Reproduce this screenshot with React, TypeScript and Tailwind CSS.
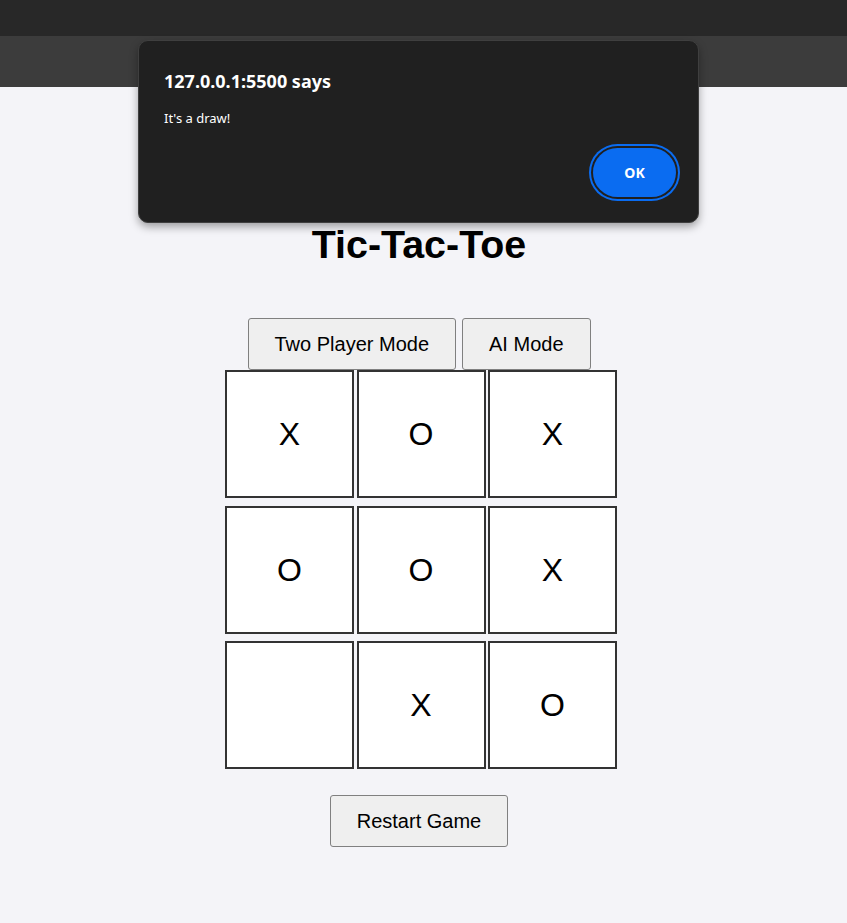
import React from "react";

const board = ["X", "O", "X", "O", "O", "X", "", "X", "O"];

export default function App() {
  return (
    <div className="relative min-h-screen bg-[#f4f4f8] font-['Liberation_Sans',Arial,sans-serif] text-black">
      <div className="h-[36px] bg-[#282828]" />
      <div className="h-[51px] bg-[#3c3c3c]" />

      <main className="flex w-[838px] flex-col items-center pt-[135px]">
        <h1 className="text-[39.4px] font-bold leading-[44px]">Tic-Tac-Toe</h1>

        <div className="mt-[52px] flex gap-[6px]">
          <button className="rounded-[3px] border border-[#808080] bg-[#efefef] px-[26px] py-[14px] text-[20px] leading-[22px]">
            Two Player Mode
          </button>
          <button className="rounded-[3px] border border-[#808080] bg-[#efefef] px-[26px] py-[14px] text-[20px] leading-[22px]">
            AI Mode
          </button>
        </div>

        <div className="ml-[4px] grid grid-cols-[129px_129px_129px] auto-rows-[128px] gap-x-[2.5px] gap-y-[7.5px]">
          {board.map((mark, i) => (
            <div
              key={i}
              className="flex items-center justify-center border-2 border-[#333333] bg-white text-[32px]"
            >
              {mark}
            </div>
          ))}
        </div>

        <button className="mt-[26px] rounded-[3px] border border-[#808080] bg-[#efefef] px-[26px] py-[14px] text-[20px] leading-[22px]">
          Restart Game
        </button>
      </main>

      {/* browser alert */}
      <div className="absolute left-[138px] top-[40px] flex h-[183px] w-[561px] flex-col rounded-[10px] border border-[#3f3f3f] bg-[#202020] pl-[25px] pr-[22px] pt-[28px] font-['Noto_Sans','Open_Sans',sans-serif] text-white shadow-[0_4px_8px_rgba(0,0,0,0.35)]">
        <div className="text-[18px] font-bold leading-[24px]">127.0.0.1:5500 says</div>
        <div className="mt-[15px] text-[13px] leading-[20px]">It's a draw!</div>
        <div className="mt-[20px] flex justify-end">
          <button className="h-[49px] w-[83px] rounded-full bg-[#0a6cf1] text-[14px] font-bold text-white ring-2 ring-[#0a6cf1] ring-offset-2 ring-offset-[#202020]">
            OK
          </button>
        </div>
      </div>
    </div>
  );
}
